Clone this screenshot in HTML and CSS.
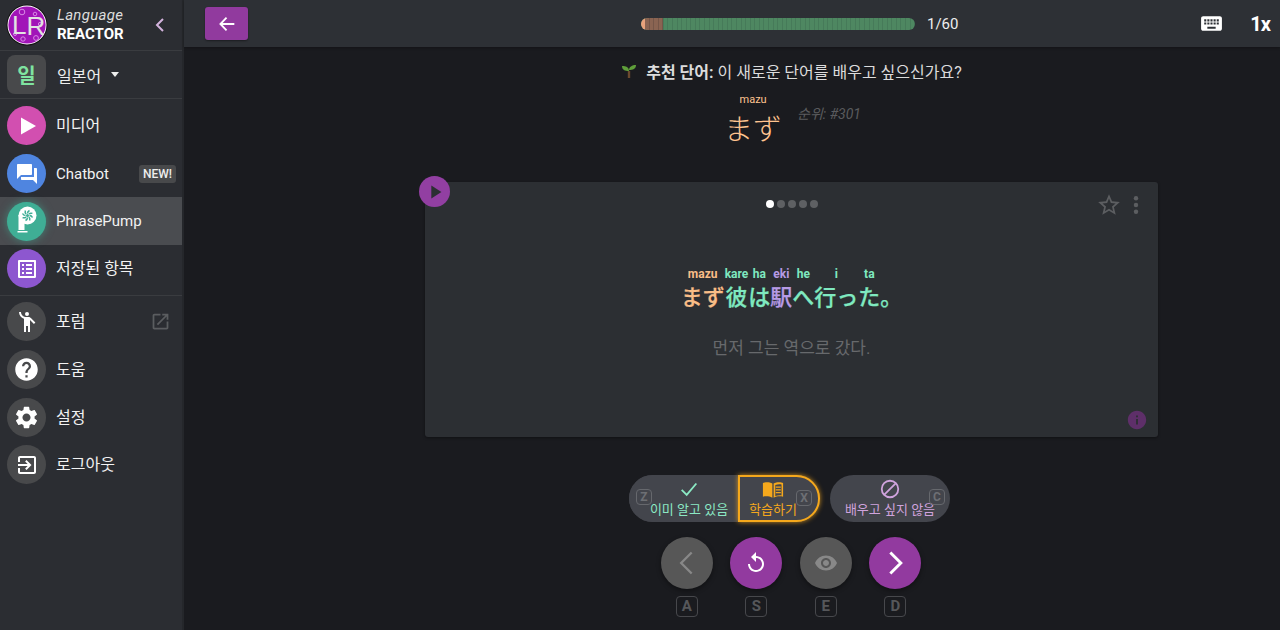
FILE: index.html
```html
<!DOCTYPE html>
<html lang="ko">
<head>
  <meta charset="UTF-8" />
  <title>Language Reactor - PhrasePump</title>
  <link rel="stylesheet" href="styles.css">
</head>
<body>
  <aside class="sidebar">
    <div class="brand">
      <svg class="logo" viewBox="0 0 42 42">
        <circle cx="21" cy="21" r="20.5" fill="#111" />
        <circle cx="21" cy="21" r="19.5" fill="#fff" />
        <circle cx="21" cy="21" r="18.6" fill="#a114b8" />
        <g fill="none" stroke="#d88ae6" stroke-width="1">
          <circle cx="16" cy="8" r="2.8" />
          <circle cx="29" cy="10" r="1.8" />
          <circle cx="34" cy="20" r="1.6" />
          <circle cx="9" cy="30" r="1.5" />
          <circle cx="17" cy="35" r="2.2" />
          <circle cx="30" cy="34" r="2.4" />
        </g>
        <text x="6" y="30" class="logo-l">L</text>
        <text x="20.500" y="31" class="logo-r">R</text>
      </svg>
      <div class="brand-name">
        <em>Language</em>
        <strong>REACTOR</strong>
      </div>
      <svg class="collapse" viewBox="0 0 12 16"><path d="M9 2 3 8l6 6" /></svg>
    </div>

    <div class="lang-row">
      <div class="lang-badge">일</div>
      <span>일본어</span>
      <i class="caret"></i>
    </div>

    <nav class="nav-group nav-main">
      <a class="nav-item">
        <span class="nav-icon ic-media"><svg viewBox="0 0 24 24"><path d="M6 3.5v17L21 12z" /></svg></span>
        <span class="ko">미디어</span>
      </a>
      <a class="nav-item">
        <span class="nav-icon ic-chat"><svg viewBox="0 0 24 24"><path d="M21 6h-2v9H6v2c0 .55.45 1 1 1h11l4 4V7c0-.55-.45-1-1-1zm-4 6V3c0-.55-.45-1-1-1H3c-.55 0-1 .45-1 1v14l4-4h10c.55 0 1-.45 1-1z" /></svg></span>
        <span>Chatbot</span>
        <b class="new-tag">NEW!</b>
      </a>
      <a class="nav-item active">
        <span class="nav-icon ic-pump">
          <svg viewBox="0 0 24 24">
            <circle cx="12.500" cy="6.500" r="9" fill="#fff" />
            <path d="M3.500 6h6v15h-6zM2.500 22h10v1.500h-10z" fill="#fff" />
            <g stroke="#3fae95" stroke-width="1.500" fill="none">
              <path d="M12.500 4.500c0-1.500 1-2.500 2-3" />
              <path d="M12.500 4.500c0-1.500 1-2.500 2-3" transform="rotate(45 12.500 6.500)" />
              <path d="M12.500 4.500c0-1.500 1-2.500 2-3" transform="rotate(90 12.500 6.500)" />
              <path d="M12.500 4.500c0-1.500 1-2.500 2-3" transform="rotate(135 12.500 6.500)" />
              <path d="M12.500 4.500c0-1.500 1-2.500 2-3" transform="rotate(180 12.500 6.500)" />
              <path d="M12.500 4.500c0-1.500 1-2.500 2-3" transform="rotate(225 12.500 6.500)" />
              <path d="M12.500 4.500c0-1.500 1-2.500 2-3" transform="rotate(270 12.500 6.500)" />
              <path d="M12.500 4.500c0-1.500 1-2.500 2-3" transform="rotate(315 12.500 6.500)" />
            </g>
            <circle cx="12.500" cy="6.500" r="1.500" fill="#3fae95" />
          </svg>
        </span>
        <span>PhrasePump</span>
      </a>
      <a class="nav-item">
        <span class="nav-icon ic-saved"><svg viewBox="0 0 24 24"><path d="M19 5v14H5V5h14m1.100-2H3.900c-.5 0-.9.4-.9.9v16.200c0 .4.4.9.9.9h16.200c.4 0 .9-.5.9-.9V3.900c0-.5-.5-.9-.9-.9zM11 7h6v2h-6V7zm0 4h6v2h-6v-2zm0 4h6v2h-6zM7 7h2v2H7zm0 4h2v2H7zm0 4h2v2H7z" /></svg></span>
        <span class="ko">저장된 항목</span>
      </a>
    </nav>

    <nav class="nav-group">
      <a class="nav-item">
        <span class="nav-icon"><svg viewBox="0 0 24 24"><circle cx="12" cy="4" r="2" /><path d="M15.890 8.110C15.500 7.720 14.830 7 13.530 7h-2.540C8.240 6.990 6 4.750 6 2H4c0 3.160 2.110 5.840 5 6.710V22h2v-6h2v6h2V10.050L18.950 14l1.410-1.410-4.470-4.480z" /></svg></span>
        <span class="ko">포럼</span>
        <svg class="external" viewBox="0 0 24 24"><path d="M19 19H5V5h7V3H5c-1.110 0-2 .9-2 2v14c0 1.100.89 2 2 2h14c1.100 0 2-.9 2-2v-7h-2v7zM14 3v2h3.590l-9.830 9.830 1.410 1.410L19 6.410V10h2V3h-7z" /></svg>
      </a>
      <a class="nav-item">
        <span class="nav-icon"><svg class="large" viewBox="0 0 24 24"><path d="M12 2C6.480 2 2 6.480 2 12s4.480 10 10 10 10-4.480 10-10S17.520 2 12 2zm1 17h-2v-2h2v2zm2.070-7.750l-.9.92C13.450 12.900 13 13.500 13 15h-2v-.5c0-1.100.45-2.100 1.170-2.830l1.240-1.260c.37-.36.59-.86.59-1.410 0-1.100-.9-2-2-2s-2 .9-2 2H8c0-2.210 1.790-4 4-4s4 1.790 4 4c0 .88-.36 1.680-.93 2.250z" /></svg></span>
        <span class="ko">도움</span>
      </a>
      <a class="nav-item">
        <span class="nav-icon"><svg class="large" viewBox="0 0 24 24"><path d="M19.140 12.940c.04-.3.06-.61.06-.94 0-.32-.02-.64-.07-.94l2.030-1.580c.18-.14.23-.41.12-.61l-1.920-3.320c-.12-.22-.37-.29-.59-.22l-2.390.96c-.5-.38-1.030-.7-1.620-.94l-.36-2.540c-.04-.24-.24-.41-.48-.41h-3.840c-.24 0-.43.17-.47.41l-.36 2.540c-.59.24-1.130.57-1.620.94l-2.390-.96c-.22-.08-.47 0-.59.22L2.740 8.870c-.12.21-.08.47.12.61l2.030 1.580c-.05.3-.09.63-.09.94s.02.64.07.94l-2.030 1.580c-.18.14-.23.41-.12.61l1.920 3.320c.12.22.37.29.59.22l2.390-.96c.5.38 1.030.7 1.620.94l.36 2.540c.05.24.24.41.48.41h3.840c.24 0 .44-.17.47-.41l.36-2.540c.59-.24 1.130-.56 1.620-.94l2.390.96c.22.08.47 0 .59-.22l1.920-3.320c.12-.22.07-.47-.12-.61l-2.010-1.580zM12 15.600c-1.980 0-3.600-1.620-3.600-3.600s1.620-3.600 3.600-3.600 3.600 1.620 3.600 3.600-1.620 3.600-3.600 3.600z" /></svg></span>
        <span class="ko">설정</span>
      </a>
      <a class="nav-item">
        <span class="nav-icon"><svg viewBox="0 0 24 24"><path d="M10.090 15.590L11.500 17l5-5-5-5-1.410 1.410L12.670 11H3v2h9.670l-2.580 2.590zM19 3H5c-1.110 0-2 .9-2 2v4h2V5h14v14H5v-4H3v4c0 1.100.89 2 2 2h14c1.100 0 2-.9 2-2V5c0-1.100-.9-2-2-2z" /></svg></span>
        <span class="ko">로그아웃</span>
      </a>
    </nav>
  </aside>

  <main class="main">
    <header class="topbar">
      <button class="back-btn">
        <svg viewBox="0 0 24 24"><path d="M20 12H5M11.500 5 4.800 12l6.700 7" /></svg>
      </button>
      <div class="progress">
        <div class="progress-bar"><i class="progress-tip"></i><i class="progress-done"></i></div>
        <span class="progress-text">1/60</span>
      </div>
      <svg class="keyboard" viewBox="0 0 24 24"><path d="M20 5H4c-1.100 0-1.990.9-1.990 2L2 17c0 1.100.9 2 2 2h16c1.100 0 2-.9 2-2V7c0-1.100-.9-2-2-2zm-9 3h2v2h-2V8zm0 3h2v2h-2v-2zM8 8h2v2H8V8zm0 3h2v2H8v-2zm-1 2H5v-2h2v2zm0-3H5V8h2v2zm9 7H8v-2h8v2zm0-4h-2v-2h2v2zm0-3h-2V8h2v2zm3 3h-2v-2h2v2zm0-3h-2V8h2v2z" /></svg>
      <span class="speed">1x</span>
    </header>

    <section class="content">
      <p class="prompt">
        <svg class="seedling" viewBox="0 0 16 16">
          <path d="M8 15V8" stroke="#6b4a2e" stroke-width="2.400" fill="none" />
          <path d="M8 8C8 4 5 3 1 3c0 4 3 5 7 5zM8 7c0-3 3-5 7-5 0 4-3 5-7 5z" fill="#5f9e3a" />
        </svg>
        <span><strong>추천 단어:</strong> 이 새로운 단어를 배우고 싶으신가요?</span>
      </p>

      <div class="word-row">
        <div class="word">
          <small>mazu</small>
          <span lang="ja">まず</span>
        </div>
        <em class="rank">순위: #301</em>
      </div>

      <article class="card">
        <button class="card-play"><svg viewBox="0 0 24 24"><path d="M8 5v14l11-7z" /></svg></button>
        <div class="card-tools">
          <svg class="star" viewBox="0 0 24 24"><path d="M22 9.240l-7.190-.62L12 2 9.190 8.630 2 9.240l5.460 4.730L5.820 21 12 17.270 18.180 21l-1.630-7.030L22 9.240zM12 15.400l-3.760 2.270 1-4.280-3.320-2.880 4.380-.38L12 6.100l1.710 4.040 4.380.38-3.320 2.880 1 4.280L12 15.400z" /></svg>
          <svg class="more" viewBox="0 0 4 18"><circle cx="2" cy="3" r="2" /><circle cx="2" cy="9" r="2" /><circle cx="2" cy="15" r="2" /></svg>
        </div>
        <div class="dots"><i class="on"></i><i></i><i></i><i></i><i></i></div>

        <div class="sentence" lang="ja">
          <span class="seg c-orange"><small>mazu</small><b>まず</b></span>
          <span class="seg c-green"><small>kare</small><b>彼</b></span>
          <span class="seg c-green"><small>ha</small><b>は</b></span>
          <span class="seg c-purple"><small>eki</small><b>駅</b></span>
          <span class="seg c-green"><small>he</small><b>へ</b></span>
          <span class="seg c-green"><small>i</small><b>行っ</b></span>
          <span class="seg c-green"><small>ta</small><b>た</b></span>
          <span class="seg c-green"><b>。</b></span>
        </div>
        <p class="translation">먼저 그는 역으로 갔다.</p>

        <svg class="info" viewBox="0 0 24 24"><path d="M12 2C6.480 2 2 6.480 2 12s4.480 10 10 10 10-4.480 10-10S17.520 2 12 2zm1 15h-2v-6h2v6zm0-8h-2V7h2v2z" /></svg>
      </article>

      <div class="choices">
        <div class="choice-group">
          <button class="choice choice-known">
            <kbd class="hint">Z</kbd>
            <svg viewBox="0 0 24 24"><path d="M4 13l5.500 5.500L20 6" /></svg>
            <span>이미 알고 있음</span>
          </button>
          <button class="choice choice-learn">
            <kbd class="hint">X</kbd>
            <svg viewBox="0 0 24 24">
              <path class="fill" d="M1 5.500C3 4.300 8 4 11.300 6v15.500C8 19.800 4 19.600 1 20.500z" />
              <path class="fill" d="M12.700 6C16 4 21 4.300 23 5.500v15c-3-.9-7-.7-10.300 1zM14.500 7.500v12.200c2.200-.8 4.700-1 6.800-.7V7c-2.200-.5-4.800-.2-6.800.5z" fill-rule="evenodd" />
              <path class="line" d="M15 10h5.500M15 13h5.500M15 16h5.500" />
            </svg>
            <span>학습하기</span>
          </button>
        </div>
        <button class="choice choice-skip">
          <kbd class="hint">C</kbd>
          <svg viewBox="0 0 24 24"><circle cx="12" cy="12" r="9" /><path d="M5.800 18.200 18.200 5.800" /></svg>
          <span>배우고 싶지 않음</span>
        </button>
      </div>

      <div class="controls">
        <div class="control">
          <button class="round"><svg class="stroke dim" viewBox="0 0 24 24"><path d="M16 3 7 12l9 9" /></svg></button>
          <kbd>A</kbd>
        </div>
        <div class="control">
          <button class="round purple"><svg viewBox="0 0 24 24"><path d="M12 5V1L7 6l5 5V7c3.310 0 6 2.690 6 6s-2.690 6-6 6-6-2.690-6-6H4c0 4.420 3.580 8 8 8s8-3.580 8-8-3.580-8-8-8z" /></svg></button>
          <kbd>S</kbd>
        </div>
        <div class="control">
          <button class="round"><svg class="dim" viewBox="0 0 24 24"><path d="M12 4.500C7 4.500 2.730 7.610 1 12c1.730 4.390 6 7.500 11 7.500s9.270-3.110 11-7.500c-1.730-4.390-6-7.500-11-7.500zM12 17c-2.760 0-5-2.240-5-5s2.240-5 5-5 5 2.240 5 5-2.240 5-5 5zm0-8c-1.660 0-3 1.340-3 3s1.340 3 3 3 3-1.340 3-3-1.340-3-3-3z" /></svg></button>
          <kbd>E</kbd>
        </div>
        <div class="control">
          <button class="round purple"><svg class="stroke" viewBox="0 0 24 24"><path d="M8 3l9 9-9 9" /></svg></button>
          <kbd>D</kbd>
        </div>
      </div>
    </section>
  </main>
</body>
</html>
```

FILE: styles.css
```css
* {
  box-sizing: border-box;
}

html, body {
  height: 100%;
}

body {
  margin: 0;
  display: flex;
  height: 630px;
  overflow: hidden;
  background: #1a1b1f;
  color: #fff;
  font-family: Roboto, "Noto Sans CJK KR", sans-serif;
}

button {
  border: none;
  padding: 0;
  font-family: inherit;
  color: inherit;
  cursor: pointer;
}

svg {
  display: block;
  fill: currentColor;
}

p {
  margin: 0;
}

/* sidebar */
.sidebar {
  width: 184px;
  flex: none;
  background: #2b2d32;
  border-right: 2px solid #25272b;
}

.brand {
  height: 51px;
  display: flex;
  align-items: center;
  padding-left: 6px;
  border-bottom: 1px solid #3a3c40;
}

.logo {
  width: 42px;
  height: 42px;
  flex: none;
}

.logo-l, .logo-r {
  font-family: "Liberation Sans", sans-serif;
  font-size: 26px;
  fill: #e2e2e2;
}

.brand-name {
  margin-left: 9px;
  display: flex;
  flex-direction: column;
  font-size: 15px;
  line-height: 19px;
}

.brand-name em {
  color: #ddd;
  letter-spacing: 0.3px;
}

.collapse {
  width: 12px;
  height: 16px;
  margin-left: auto;
  margin-right: 16px;
  fill: none;
  stroke: #d3b3dd;
  stroke-width: 2;
}

.lang-row {
  height: 48px;
  display: flex;
  align-items: center;
  padding-left: 7px;
  font-size: 16px;
  border-bottom: 1px solid #3a3c40;
  color: #eee;
}

.lang-badge {
  width: 39px;
  height: 39px;
  display: flex;
  align-items: center;
  justify-content: center;
  border-radius: 8px;
  background: #48494b;
  color: #7fe3a0;
  font-size: 20px;
  font-weight: 700;
  margin-right: 11px;
}

.caret {
  margin-left: 10px;
  border-left: 4.500px solid transparent;
  border-right: 4.500px solid transparent;
  border-top: 5px solid #eee;
}

.nav-group {
  padding-top: 2px;
}

.nav-main {
  padding: 3px 0 2px;
  border-bottom: 1px solid #3a3c40;
  height: 197px;
}

.nav-item {
  height: 47.700px;
  display: flex;
  align-items: center;
  padding: 0 7px;
  font-size: 15px;
  color: #f2f2f2;
}

.nav-item .ko {
  font-size: 16px;
  margin-top: -3px;
}

.nav-item.active {
  background: #4a4c50;
}

.nav-icon {
  width: 39px;
  height: 39px;
  flex: none;
  margin-right: 10px;
  display: flex;
  align-items: center;
  justify-content: center;
  border-radius: 50%;
  background: #48494b;
  color: #fff;
}

.nav-icon svg {
  width: 24px;
  height: 24px;
  overflow: visible;
}

.nav-icon svg.large {
  width: 27px;
  height: 27px;
}

.ic-media { background: #d24fb0; }
.ic-chat { background: #4f85e0; }
.ic-saved { background: #8d57cf; }

.ic-pump {
  background: #3fae95;
  box-shadow: 0 0 8px rgba(63, 174, 149, 0.6);
}

.new-tag {
  margin-left: auto;
  margin-right: -1px;
  padding: 0 4px;
  height: 18px;
  line-height: 18px;
  border-radius: 3px;
  background: #48494b;
  font-size: 12px;
  font-weight: 500;
  color: #eee;
}

.external {
  width: 21px;
  height: 21px;
  margin-left: auto;
  margin-right: 4px;
  color: #5b5d60;
}

/* main area */
.main {
  flex: 1;
  display: flex;
  flex-direction: column;
  min-width: 0;
}

.topbar {
  height: 47px;
  flex: none;
  display: flex;
  align-items: center;
  padding-left: 21px;
  background: #2d3035;
  box-shadow: 0 1px 3px rgba(0, 0, 0, 0.3);
}

.back-btn {
  width: 43px;
  height: 33px;
  display: flex;
  align-items: center;
  justify-content: center;
  border-radius: 3px;
  background: #913a9e;
  box-shadow: 0 1px 2px rgba(0, 0, 0, 0.4);
}

.back-btn svg {
  width: 22px;
  height: 22px;
  fill: none;
  stroke: #fff;
  stroke-width: 2;
}

.progress {
  margin-left: 393px;
  display: flex;
  align-items: center;
}

.progress-bar {
  width: 274px;
  height: 12px;
  display: flex;
  border-radius: 6px;
  overflow: hidden;
  background: repeating-linear-gradient(to right, #4e8761 0, #4e8761 3.570px, #467a59 3.570px, #467a59 4.570px);
}

.progress-tip {
  width: 4px;
  background: #e8a27c;
  border-radius: 6px 0 0 6px;
}

.progress-done {
  width: 18px;
  background: repeating-linear-gradient(to right, #8a6452 0, #8a6452 3.570px, #755648 3.570px, #755648 4.570px);
}

.progress-text {
  margin-left: 12px;
  font-size: 15px;
  color: #eee;
}

.keyboard {
  width: 25px;
  height: 25px;
  margin-left: auto;
  color: #fff;
}

.speed {
  margin-left: 26px;
  margin-right: 10px;
  font-size: 20px;
  font-weight: 700;
  letter-spacing: -1px;
}

.content {
  flex: 1;
  padding: 15px 122px 0 241px;
  display: flex;
  flex-direction: column;
  align-items: center;
}

.prompt {
  display: flex;
  align-items: center;
  height: 18px;
  font-size: 16px;
  color: #dcdcdc;
  white-space: nowrap;
}

.prompt strong {
  font-weight: 700;
}

.seedling {
  width: 16px;
  height: 16px;
  margin-right: 9px;
}

.word-row {
  margin-top: 13px;
  margin-left: 2px;
  display: flex;
  align-items: center;
  gap: 15px;
}

.word {
  display: flex;
  flex-direction: column;
  align-items: center;
  color: #ffc48f;
}

.word small {
  font-size: 11px;
  line-height: 13px;
}

.word span {
  font-family: "Noto Sans CJK JP", sans-serif;
  font-size: 29px;
  line-height: 42px;
  font-weight: 300;
}

.rank {
  margin-bottom: 16px;
  font-size: 14px;
  color: #5a5b5e;
}

.card {
  position: relative;
  width: 733px;
  height: 255px;
  margin-top: 34px;
  flex: none;
  display: flex;
  flex-direction: column;
  align-items: center;
  border-radius: 3px;
  background: #2c2f33;
  box-shadow: 0 1px 3px rgba(0, 0, 0, 0.4);
}

.card-play {
  position: absolute;
  left: -6px;
  top: -6px;
  width: 31px;
  height: 31px;
  display: flex;
  align-items: center;
  justify-content: center;
  border-radius: 50%;
  background: #923fa2;
  color: #2c2f33;
}

.card-play svg {
  width: 22px;
  height: 22px;
}

.card-tools {
  position: absolute;
  right: 19px;
  top: 10px;
  display: flex;
  align-items: center;
  gap: 11px;
  color: #5c5e61;
}

.star {
  width: 26px;
  height: 26px;
}

.more {
  width: 6px;
  height: 20px;
}

.dots {
  margin-top: 18px;
  display: flex;
  gap: 3px;
}

.dots i {
  width: 8px;
  height: 8px;
  border-radius: 50%;
  background: #5e6063;
}

.dots i.on {
  background: #fff;
}

.sentence {
  margin-top: 59px;
  display: flex;
  align-items: flex-end;
  white-space: nowrap;
}

.seg {
  display: flex;
  flex-direction: column;
  align-items: center;
}

.seg small {
  font-size: 12px;
  font-weight: 700;
  line-height: 14px;
}

.seg b {
  font-family: "Noto Sans CJK JP", sans-serif;
  font-size: 22px;
  font-weight: 500;
  -webkit-text-stroke: 0.25px;
  line-height: 28px;
}

.c-orange { color: #f9bd87; }
.c-green { color: #7fe9c0; }
.c-purple { color: #b79be6; }

.translation {
  margin-top: 25px;
  font-size: 17px;
  color: #67696c;
}

.info {
  position: absolute;
  right: 10px;
  bottom: 6px;
  width: 22px;
  height: 22px;
  color: #5e2f69;
}

.choices {
  margin-top: 38px;
  margin-right: 4px;
  display: flex;
  gap: 10px;
}

.choice-group {
  display: flex;
  width: 191px;
  height: 47px;
  background: #43454c;
  border-radius: 24px;
}

.choice {
  position: relative;
  height: 47px;
  display: flex;
  flex-direction: column;
  align-items: center;
  justify-content: center;
  background: #43454c;
  font-size: 13px;
  line-height: 15px;
}

.choice svg {
  width: 22px;
  height: 22px;
  margin-top: -3px;
  margin-bottom: 2px;
  fill: none;
  stroke: currentColor;
  stroke-width: 2;
}

.choice-known {
  width: 109px;
  padding-left: 11px;
  border-radius: 24px 0 0 24px;
  color: #8be9c4;
}

.choice-learn {
  width: 82px;
  padding-right: 12px;
  border: 2px solid #f5a81c;
  border-radius: 0 24px 24px 0;
  box-shadow: 0 0 5px rgba(245, 168, 28, 0.8);
  color: #f5a81c;
}

.choice-learn svg .fill {
  fill: currentColor;
  stroke: none;
}

.choice-learn svg .line {
  stroke-width: 1.300;
}

.choice-skip {
  width: 120px;
  border-radius: 24px;
  color: #d0a3dd;
}

.hint {
  position: absolute;
  top: 14px;
  width: 16px;
  height: 16px;
  line-height: 14px;
  border: 1px solid #66686d;
  border-radius: 4px;
  font-family: Roboto, sans-serif;
  font-size: 12px;
  font-weight: 700;
  text-align: center;
  color: #6d6f74;
}

.choice-known .hint { left: 7px; }
.choice-learn .hint { right: 6px; top: 13px; }
.choice-skip .hint { right: 5px; }

.controls {
  margin-top: 15px;
  margin-right: 1px;
  display: flex;
  gap: 17.500px;
}

.control {
  display: flex;
  flex-direction: column;
  align-items: center;
  width: 52px;
}

.round {
  width: 52px;
  height: 52px;
  display: flex;
  align-items: center;
  justify-content: center;
  border-radius: 50%;
  background: #575757;
  color: #fff;
  box-shadow: 0 2px 5px rgba(0, 0, 0, 0.4);
}

.round.purple {
  background: #923a9f;
}

.round svg {
  width: 24px;
  height: 24px;
}

.round svg.dim {
  color: #888;
}

.round svg.stroke {
  width: 28px;
  height: 28px;
  fill: none;
  stroke: currentColor;
  stroke-width: 2.500;
}

.round svg.stroke.dim {
  stroke-width: 2;
}

.control kbd {
  margin-top: 7px;
  width: 22px;
  height: 21px;
  line-height: 19px;
  border: 1px solid #47484c;
  border-radius: 4px;
  font-family: Roboto, sans-serif;
  font-size: 15px;
  font-weight: 700;
  text-align: center;
  color: #56575a;
}
```
